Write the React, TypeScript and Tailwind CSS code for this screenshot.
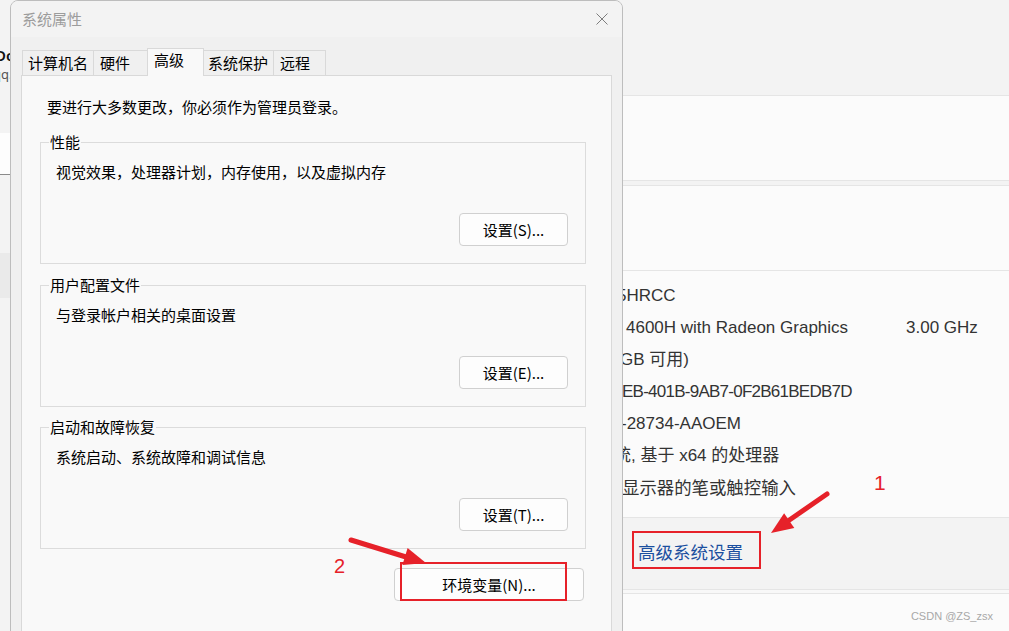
import React from "react";

const cjk = "font-['Noto_Sans_CJK_SC',sans-serif]";

function SetButton({ label }: { label: string }) {
    return (
        <button className="w-[109px] h-[33px] rounded-[4px] border border-[#d0d0d0] bg-[#fdfdfd] text-[15px] leading-[20px] text-black">
            {label}
        </button>
    );
}

function GroupBox({ title, desc, btn, className }: { title: string; desc: string; btn: string; className?: string }) {
    return (
        <fieldset className={"h-[132px] border border-[#dcdcdc] " + (className ?? "")}>
            <legend className="ml-[8px] px-[1px] text-[15px] leading-[20px] text-black">{title}</legend>
            <div className="pl-[15px] pt-[10px] text-[15px] leading-[20px] text-black">{desc}</div>
            <div className="mt-[31px] flex justify-end pr-[17px]">
                <SetButton label={btn} />
            </div>
        </fieldset>
    );
}

const tabs = [
    { name: "计算机名", cls: "w-[71px] h-[25px] border-l border-t pl-[5px] items-center" },
    { name: "硬件", cls: "w-[54px] h-[25px] border-l border-t pl-[6px] items-center" },
    { name: "高级", cls: "w-[57px] h-[28px] border-l border-t border-r pl-[6px] pt-[1px] items-start bg-[#f9f9f9] mb-[-1px] relative z-10" },
    { name: "系统保护", cls: "w-[69px] h-[25px] border-t pl-[4px] items-center" },
    { name: "远程", cls: "w-[53px] h-[25px] border-l border-t border-r pl-[6px] items-center" },
];

function SystemDialog() {
    return (
        <div className={"absolute left-[10px] top-0 w-[613px] h-[690px] rounded-t-[8px] border border-[#bdbdbd] bg-[#f0f0f0] " + cjk}>
            <div className="h-[36px] rounded-t-[7px] bg-[#f3f3f3] flex items-center justify-between pl-[11px] pr-[14px]">
                <span className="text-[15px] leading-[20px] text-[#9c9c9c]">系统属性</span>
                <svg width="12" height="12" viewBox="0 0 12 12">
                    <path d="M0.5 0.5 L11.5 11.5 M11.5 0.5 L0.5 11.5" stroke="#7d7d7d" strokeWidth="1" fill="none" />
                </svg>
            </div>

            <div className="mt-[11px] ml-[10px] mr-[10px]">
                <div className="flex items-end h-[27px] pl-[1px]">
                    {tabs.map((t) => (
                        <div key={t.name} className={"flex border-[#d9d9d9] text-[15px] leading-[20px] text-black " + t.cls}>
                            {t.name}
                        </div>
                    ))}
                </div>

                <div className="h-[620px] border border-[#d9d9d9] bg-[#f9f9f9] pt-[21px] pl-[18px] pr-[25px]">
                    <p className="pl-[7px] text-[15px] leading-[20px] text-black">要进行大多数更改，你必须作为管理员登录。</p>

                    <GroupBox className="mt-[15px]" title="性能" desc="视觉效果，处理器计划，内存使用，以及虚拟内存" btn="设置(S)..." />
                    <GroupBox className="mt-[11px]" title="用户配置文件" desc="与登录帐户相关的桌面设置" btn="设置(E)..." />
                    <GroupBox className="mt-[10px]" title="启动和故障恢复" desc="系统启动、系统故障和调试信息" btn="设置(T)..." />

                    <div className="mt-[19px] flex justify-end pr-[2px]">
                        <button className="w-[190px] h-[33px] rounded-[4px] border border-[#d0d0d0] bg-[#fdfdfd] text-[15px] leading-[20px] text-black">
                            环境变量(N)...
                        </button>
                    </div>
                </div>
            </div>
        </div>
    );
}

const specRows = [
    { text: "5HRCC", cls: "ml-[-5px]" },
    { text: "4600H with Radeon Graphics", cls: "ml-[4px]", extra: "3.00 GHz" },
    { text: "GB 可用)", cls: "ml-[-2px]" },
    { text: "EB-401B-9AB7-0F2B61BEDB7D", cls: "ml-[0px] tracking-[-0.75px]" },
    { text: "-28734-AAOEM", cls: "ml-[-1px]" },
    { text: "统, 基于 x64 的处理器", cls: "ml-[-8px]" },
    { text: "显示器的笔或触控输入", cls: "ml-[0px] text-[17.4px]" },
];

function SettingsPage() {
    return (
        <div className="flex h-full">
            <aside className="w-[340px] shrink-0 flex flex-col">
                <div className="pt-[45px]">
                    <div className="ml-[-5px] text-[15px] leading-[20px] font-semibold text-[#111]">Dominic</div>
                    <div className="ml-[-7px] text-[13px] leading-[18px] text-[#555]">qq.com</div>
                </div>
                <div className="mt-[50px] h-[42px] bg-[#fdfdfd] border-b border-[#8a8a8a]" />
                <div className="mt-[78px] h-[45px] bg-[#eaeaea]" />
            </aside>

            <main className="flex-1 flex flex-col font-['Liberation_Sans','Noto_Sans_CJK_SC',sans-serif]">
                <div className="h-[95px] shrink-0" />
                <div className="h-[86px] shrink-0 border-y border-[#e5e5e5] bg-[#fbfbfb]" />
                <div className="h-[4px] shrink-0" />
                <div className="h-[86px] shrink-0 border-y border-[#e5e5e5] bg-[#fbfbfb]" />
                <div className="h-[247px] shrink-0 border-b border-[#e5e5e5] bg-[#fbfbfb] pt-[9px] pl-[282px]">
                    {specRows.map((r) => (
                        <div key={r.text} className="h-[32px] flex items-center text-[17px] leading-[32px] text-[#333] whitespace-nowrap">
                            <span className={r.extra ? "w-[280px] shrink-0 " + r.cls : r.cls}>{r.text}</span>
                            {r.extra && <span>{r.extra}</span>}
                        </div>
                    ))}
                </div>
                <div className="h-[72px] shrink-0 border-b border-[#e5e5e5] bg-[#f3f3f3] flex items-center pl-[298px] pb-[3px]">
                    <span className="text-[17.5px] leading-[24px] text-[#1b4f9f] font-['Noto_Sans_CJK_SC',sans-serif]">高级系统设置</span>
                </div>
                <div className="h-[4px] shrink-0 border-b border-[#e5e5e5] bg-[#f8f8f8]" />
                <div className="flex-1 bg-[#fbfbfb] flex justify-end items-start pt-[15px] pr-[16px]">
                    <span className="text-[11px] leading-[14px] text-[#a8a8a8]">CSDN @ZS_zsx</span>
                </div>
            </main>
        </div>
    );
}

function Annotations() {
    return (
        <>
            <svg className="absolute inset-0 pointer-events-none" width="1009" height="631" viewBox="0 0 1009 631">
                <rect x="401" y="563" width="165" height="37" fill="none" stroke="#e62129" strokeWidth="2" />
                <rect x="633" y="532" width="127" height="36" fill="none" stroke="#e62129" strokeWidth="2" />
                <line x1="351" y1="540" x2="406" y2="557" stroke="#e62129" strokeWidth="5" strokeLinecap="round" />
                <polygon points="426,563 402.4,565.1 407.6,547.9" fill="#e62129" />
                <line x1="827" y1="494" x2="788" y2="521" stroke="#e62129" strokeWidth="5" strokeLinecap="round" />
                <polygon points="771,533 794.3,528 784.1,513.2" fill="#e62129" />
            </svg>
            <span className="absolute left-[874px] top-[472px] text-[21px] leading-none text-[#e62129] font-['Liberation_Sans',sans-serif]">1</span>
            <span className="absolute left-[334px] top-[556px] text-[20px] leading-none text-[#e62129] font-['Liberation_Sans',sans-serif]">2</span>
        </>
    );
}

export default function App() {
    return (
        <div className="relative w-[1009px] h-[631px] overflow-hidden bg-[#f3f3f3]">
            <SettingsPage />
            <SystemDialog />
            <Annotations />
        </div>
    );
}
